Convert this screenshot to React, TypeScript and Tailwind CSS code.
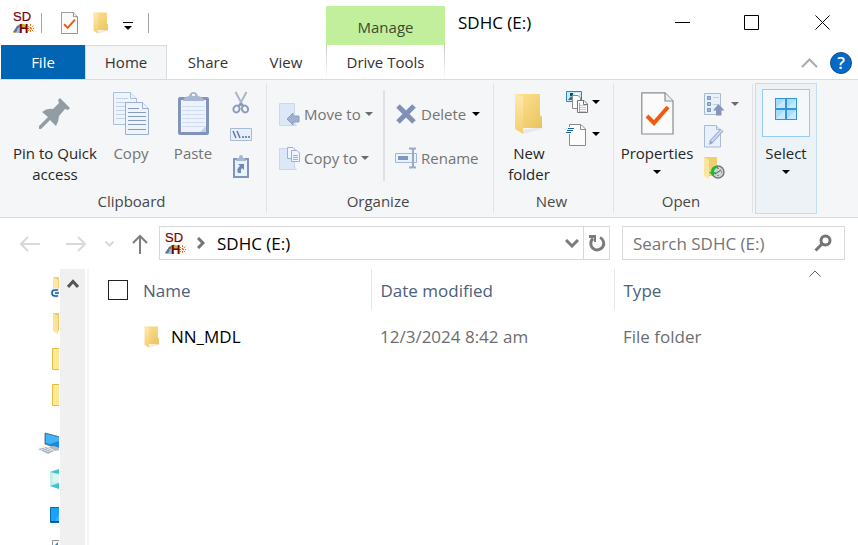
import type { ReactNode } from 'react';

function DriveIcon() {
  return (
    <svg width="22" height="23" viewBox="0 0 22 23" aria-hidden="true" className="shrink-0 overflow-visible">
      <path d="M0 22L4 15Q9 10 14 15L13 17L7 17L3 22Z" fill="#c2b53c" />
      <path d="M0 21L4 15L7 14L4 21Z" fill="#5d7894" />
      <path d="M5 17h3v5H3Z" fill="#a5bce4" />
      <g stroke="#ee741e" strokeWidth="1" strokeDasharray="2 1">
        <path d="M17.5 13v9M14 17.5h7M14.5 14.5l6 6M20.500 14.500l-6 6" />
      </g>
      <text fill="#790008" fontFamily='"Liberation Sans", sans-serif' fontSize="13">
        <tspan x="0" y="10" stroke="#790008" strokeWidth="0.2">SD</tspan>
        <tspan x="6" y="22" fontWeight="bold">H</tspan>
      </text>
    </svg>
  );
}

function FolderIcon({ className }: { className: string }) {
  return (
    <svg viewBox="0 0 30 42" preserveAspectRatio="none" aria-hidden="true" className={className}>
      <defs>
        <linearGradient id="folderBack" x2="1" y2="1">
          <stop stopColor="#ffe394" />
          <stop offset="1" stopColor="#e9c35f" />
        </linearGradient>
        <linearGradient id="folderFront" x2="0" y2="1">
          <stop stopColor="#ffe9ae" />
          <stop offset="1" stopColor="#f5cf70" />
        </linearGradient>
      </defs>
      <path d="M8 37L30 34L27 36L9 41Z" fill="#e9e8e6" />
      <path d="M1 1H26V22L28 24V35H6Z" fill="url(#folderBack)" />
      <path d="M1 1L9 4V41L1 36Z" fill="url(#folderFront)" />
    </svg>
  );
}

function CheckPage({ className, stroke }: { className: string; stroke: string }) {
  return (
    <svg viewBox="0 0 33 43" preserveAspectRatio="none" aria-hidden="true" className={className}>
      <path d="M.8 .8H24L32 9V42H.8Z" fill="#fbfbfb" stroke="#8b8b8b" strokeWidth={stroke} />
      <path d="M24 1V9H32" fill="#eee" stroke="#8b8b8b" strokeWidth={stroke} />
      <path d="M6 24L13 31L27 15" fill="none" stroke="#f25b0d" strokeWidth="4" />
    </svg>
  );
}

function Caret({ className = 'text-black' }: { className?: string }) {
  return (
    <svg width="8" height="4" viewBox="0 0 8 4" aria-hidden="true" className={`shrink-0 ${className}`}>
      <path d="M0 0H8L4 4Z" fill="currentColor" />
    </svg>
  );
}

function PinIcon() {
  return (
    <svg width="32" height="32" viewBox="0 0 32 32" aria-hidden="true">
      <path d="M21 0L31 10L29 12L26 11L20 18Q20 23 17 28L11 22L2 31L0 31V28L9 19L3 14Q8 10 14 11L20 5L19 2Z" fill="#929da3" />
    </svg>
  );
}

function CopyIcon() {
  return (
    <svg width="36" height="43" viewBox="0 0 36 43" fill="#eef4fd" stroke="#abbddc" aria-hidden="true">
      <path d="M.5 .5H17.5L23.5 6.5V32.5H.5Z" />
      <path d="M17.5 .5V6.5H23.5" />
      <path d="M3 6.5H15M3 10.5H20M3 14.5H20M3 18.5H20M3 22.5H20M3 26.5H20" stroke="#c4d2e9" />
      <path d="M12.5 10.5H29.5L35.5 16.5V42.5H12.5Z" stroke="#9dafd1" />
      <path d="M29.5 10.5V16.5H35.5" stroke="#9dafd1" />
      <path d="M15 16.5H26M15 20.5H33M15 24.5H33M15 28.5H33M15 32.5H33M15 37.5H33" stroke="#899abc" />
    </svg>
  );
}

function PasteIcon() {
  return (
    <svg width="31" height="44" viewBox="0 0 31 44" aria-hidden="true">
      <path d="M2 5H29Q31 5 31 7V41Q31 43 29 43H2Q0 43 0 41V7Q0 5 2 5Z" fill="#8294bb" />
      <path d="M3 8H28V40H3Z" fill="#edf4ff" />
      <path d="M4 14.5H27M4 18.5H27M4 22.5H27M4 26.5H27M4 30.5H27M4 34.5H27" stroke="#cfdcf1" />
      <path d="M22 40L28 34V40Z" fill="#c0d0ec" />
      <path d="M5 9Q5 5 11 4Q12 0 15.5 0Q19 0 20 4Q26 5 26 9Z" fill="#a8b7d3" />
      <path d="M14 2H17V4H14Z" fill="#eef4fd" />
    </svg>
  );
}

function CutIcon() {
  return (
    <svg width="18" height="23" viewBox="0 0 18 23" fill="none" aria-hidden="true">
      <path d="M3.5 1L10 13M14.5 1L8 13" stroke="#a9b5ca" strokeWidth="2" />
      <path d="M8 12H10L13 15H5Z" fill="#8b9cc1" />
      <ellipse cx="4.5" cy="18" rx="3" ry="3.5" stroke="#8b9cc1" strokeWidth="2" transform="rotate(25 4.5 18)" />
      <ellipse cx="13" cy="18" rx="3" ry="3.5" stroke="#8b9cc1" strokeWidth="2" transform="rotate(-25 13 18)" />
    </svg>
  );
}

function CopyPathIcon() {
  return (
    <svg width="22" height="13" viewBox="0 0 22 13" aria-hidden="true">
      <path d="M.5 .5H21.5V12.5H.5Z" fill="#e7effb" stroke="#a8bad9" />
      <path d="M3 3L6 10M7 3L10 10" stroke="#64789f" strokeWidth="1.5" />
      <path d="M12 8H14V10H12ZM15 8H17V10H15ZM18 8H20V10H18Z" fill="#7b8db1" />
    </svg>
  );
}

function PasteShortcutIcon() {
  return (
    <svg width="16" height="23" viewBox="0 0 16 23" aria-hidden="true">
      <path d="M1 4H15V22H1Z" fill="#eaf2fe" stroke="#8294bb" strokeWidth="2" />
      <path d="M3 6Q3 3 6 3Q6 0 8 0Q10 0 10 3Q13 3 13 6Z" fill="#a8b7d3" />
      <path d="M5 9H11V15L9 13Q7 15 8 18H5Q3 14 7 11Z" fill="#7488b3" />
    </svg>
  );
}

function MoveIcon() {
  return (
    <svg width="21" height="23" viewBox="0 0 21 23" aria-hidden="true">
      <path d="M.5 .5H15.5V20L17.5 22.5H.5Z" fill="#dce7f7" stroke="#cbd8ec" />
      <path d="M8 16L14 10V13H20V19H14V22Z" fill="#a0b0ce" stroke="#8b9dc1" />
    </svg>
  );
}

function CopyToIcon() {
  return (
    <svg width="21" height="23" viewBox="0 0 21 23" aria-hidden="true">
      <path d="M.5 1.5H15.5V20L17.5 22.5H.5Z" fill="#dce7f7" stroke="#cbd8ec" />
      <g fill="#f0f6ff" stroke="#9fb1d1">
        <path d="M8.5 .5H14L16.5 3V11.5H8.5Z" />
        <path d="M12.5 3.5H18L20.5 6V14.5H12.5Z" />
        <path d="M14 8.5H19M14 10.5H19M14 12.5H19" />
      </g>
    </svg>
  );
}

function DeleteIcon() {
  return (
    <svg width="22" height="20" viewBox="0 0 22 20" aria-hidden="true">
      <path d="M3 2L19 18M19 2L3 18" stroke="#8090b6" strokeWidth="5" />
    </svg>
  );
}

function RenameIcon() {
  return (
    <svg width="22" height="22" viewBox="0 0 22 22" fill="none" aria-hidden="true">
      <path d="M.5 6.5H21.5V15.5H.5Z" fill="#e9f2ff" stroke="#a1b6d9" />
      <path d="M3 9H13V13H3Z" fill="#8295be" />
      <path d="M14 1.5H17L18 3L19 1.5H21M18 2V20M14 20.5H17L18 19L19 20.5H21" stroke="#9aaac8" strokeWidth="2" />
    </svg>
  );
}

function NewItemIcon() {
  return (
    <svg width="22" height="22" viewBox="0 0 22 22" aria-hidden="true">
      <path d="M.5 .5H15.5V10.5H.5Z" fill="#c7edfa" stroke="#3484b7" />
      <path d="M2 9L5 5L8 9Z" fill="#366da0" />
      <path d="M4 2H7V5H4Z" fill="#174b55" />
      <path d="M9 2H13V4H9Z" fill="#fff" />
      <path d="M6.5 4.5H12L14.5 7V17.5H6.5Z" fill="#fff" stroke="#8b8b8b" />
      <path d="M11.5 9.5H18L21.5 13V21.5H11.5Z" fill="#fff" stroke="#777" />
      <path d="M17.5 10V13.5H21" fill="none" stroke="#777" />
      <path d="M13.5 12V21" stroke="#e58d8d" />
      <path d="M14 14.5H20M14 16.5H20M14 18.5H20M14 20.5H20" stroke="#b3d2e8" />
    </svg>
  );
}

function EasyAccessIcon() {
  return (
    <svg width="22" height="23" viewBox="0 0 22 23" aria-hidden="true">
      <path d="M3.500 1.500H15L19.500 6V22.500H3.500Z" fill="#fcfcfc" stroke="#8b8b8b" />
      <path d="M14.500 2V6.500H19" fill="none" stroke="#8b8b8b" />
      <path d="M0 4H5V11H0Z" fill="#f5f6f7" />
      <path d="M2 5.500H8M1 7.500H7M0 9.500H5" stroke="#155ca5" />
    </svg>
  );
}

function OpenIcon() {
  return (
    <svg width="21" height="23" viewBox="0 0 21 23" aria-hidden="true">
      <path d="M.5 .5H16.5V21.5H.5Z" fill="#e8f0fb" stroke="#aabbd6" />
      <path d="M3.5 3.5H6.5V6.5H3.5ZM3.5 9.5H6.5V12.5H3.5ZM3.5 15.5H6.5V18.5H3.5Z" fill="#a7bad8" stroke="#7f91b6" />
      <path d="M9 4.5H15M9 11.5H15" stroke="#c1cde0" />
      <path d="M14.5 11L20.5 17.5H17.5V22.5H12V17.5H9Z" fill="#8596b9" />
    </svg>
  );
}

function EditIcon() {
  return (
    <svg width="21" height="23" viewBox="0 0 21 23" aria-hidden="true">
      <path d="M.5 .5H12L16.5 5V22H.5Z" fill="#e8f0fb" stroke="#a9bad6" />
      <path d="M12.5 .5V4.5H17" fill="none" stroke="#a9bad6" />
      <path d="M18 5L7 17" stroke="#98aaca" strokeWidth="4" />
      <path d="M18 5L7 17" stroke="#c8d8ef" strokeWidth="2" />
      <path d="M5 20L6 15L9 18Z" fill="#91a3c4" />
    </svg>
  );
}

function HistoryIcon() {
  return (
    <svg width="21" height="24" viewBox="0 0 21 24" aria-hidden="true">
      <path d="M0 1H13V20H4Z" fill="#f0cf70" />
      <path d="M0 1L5 4V23L0 20Z" fill="#ffe5a0" />
      <circle cx="14" cy="16" r="6" fill="#d0d3d3" stroke="#757a7b" strokeWidth="1.5" />
      <path d="M11 18L14 16L17 14M14 12V13M18 16H17M14 20V19" stroke="#555" fill="none" />
      <path d="M14 10Q7 9 7 16H5L9 20L12 16H10Q10 12 14 12Z" fill="#22b63a" />
    </svg>
  );
}

function SelectIcon() {
  return (
    <svg width="22" height="22" viewBox="0 0 22 22" aria-hidden="true">
      <path d="M0 0H22V22H0Z" fill="#3196df" />
      <path d="M1 1H10V10H1ZM12 1H21V10H12ZM1 12H10V21H1ZM12 12H21V21H12Z" fill="#a8dcfb" />
      <path d="M1 10L10 1V10ZM12 10L21 1V10ZM1 21L10 12V21ZM12 21L21 12V21Z" fill="#c6e9ff" />
    </svg>
  );
}

function Group({ label, className, children }: { label: string; className: string; children: ReactNode }) {
  return (
    <section aria-label={label} className={`my-1 flex shrink-0 flex-col border-r border-[#e1e2e3] ${className}`}>
      <div className="flex h-[108px]">{children}</div>
      <h2 className="pr-1 pt-0.5 text-center leading-6 text-[#484848]">{label}</h2>
    </section>
  );
}

function BigButton({ icon, children, className }: { icon: ReactNode; children: ReactNode; className: string }) {
  return (
    <button className={`flex shrink-0 flex-col items-center leading-[21px] ${className}`}>
      <span className="flex h-[59px] items-center">{icon}</span>
      {children}
    </button>
  );
}

function IconButton({ label, children }: { label: string; children: ReactNode }) {
  return (
    <button aria-label={label} className="flex h-8 items-center gap-1">
      {children}
    </button>
  );
}

function RowButton({ icon, label, caret }: { icon: ReactNode; label: string; caret?: string }) {
  return (
    <button className="flex h-11 items-center gap-1 text-[#747474]">
      {icon}
      <span>{label}</span>
      {caret && <Caret className={caret} />}
    </button>
  );
}

function Ribbon() {
  return (
    <div className="flex h-[139px] shrink-0 overflow-hidden border-y border-[#dadbdc] bg-[#f5f6f7] pl-px">
      <Group label="Clipboard" className="w-[266px]">
        <BigButton className="w-[108px] text-[#262626]" icon={<PinIcon />}>
          <span>Pin to Quick</span>
          <span>access</span>
        </BigButton>
        <BigButton className="w-11 text-[#747474]" icon={<CopyIcon />}>
          Copy
        </BigButton>
        <BigButton className="w-20 text-[#747474]" icon={<PasteIcon />}>
          Paste
        </BigButton>
        <div className="-ml-[3px] flex flex-col items-center pt-0.5">
          <IconButton label="Cut"><CutIcon /></IconButton>
          <IconButton label="Copy path"><CopyPathIcon /></IconButton>
          <IconButton label="Paste shortcut"><PasteShortcutIcon /></IconButton>
        </div>
      </Group>

      <Group label="Organize" className="w-[227px]">
        <div className="ml-3 w-[104px] pt-2">
          <RowButton icon={<MoveIcon />} label="Move to" caret="text-[#6b6b6b]" />
          <RowButton icon={<CopyToIcon />} label="Copy to" caret="text-[#6b6b6b]" />
        </div>
        <div className="mt-1.5 h-[91px] w-0.5 bg-[#dfe1e3]" />
        <div className="pl-2.5 pt-2">
          <RowButton icon={<DeleteIcon />} label="Delete" caret="ml-0.5 text-black" />
          <RowButton icon={<RenameIcon />} label="Rename" />
        </div>
      </Group>

      <Group label="New" className="w-[120px]">
        <BigButton className="w-[70px] text-[#262626]" icon={<FolderIcon className="h-[42px] w-[30px]" />}>
          <span>New</span>
          <span>folder</span>
        </BigButton>
        <div className="flex flex-col pl-0.5 pt-0.5">
          <IconButton label="New item"><NewItemIcon /><Caret /></IconButton>
          <IconButton label="Easy access"><EasyAccessIcon /><Caret /></IconButton>
        </div>
      </Group>

      <Group label="Open" className="w-[139px]">
        <BigButton className="w-[86px] text-[#262626]" icon={<CheckPage className="h-[43px] w-[33px]" stroke="1.2" />}>
          <span>Properties</span>
          <span className="flex h-4 items-center"><Caret /></span>
        </BigButton>
        <div className="flex flex-col pl-1 pt-1">
          <IconButton label="Open with"><OpenIcon /><Caret className="ml-0.5 text-[#6b6b6b]" /></IconButton>
          <IconButton label="Edit"><EditIcon /></IconButton>
          <IconButton label="History"><HistoryIcon /></IconButton>
        </div>
      </Group>

      <button className="my-[3px] ml-0.5 flex w-[62px] shrink-0 flex-col items-center border border-[#c4ddf2] bg-[#edf2f6] pt-[5px] leading-[21px] text-[#262626]">
        <span className="flex h-12 w-12 items-start justify-center border border-[#99caf5] bg-[#f5f8fa] pt-2">
          <SelectIcon />
        </span>
        <span className="mt-1.5">Select</span>
        <span className="flex h-4 items-center"><Caret /></span>
      </button>
    </div>
  );
}

function TitleBar() {
  return (
    <header className="flex h-20 shrink-0">
      <div className="flex w-[325px] shrink-0 flex-col">
        <div className="flex h-[45px] items-center gap-2 pl-[13px]">
          <DriveIcon />
          <span className="-ml-0.5 h-5 w-px bg-[#a5a5a5]" />
          <button aria-label="Properties" className="ml-[11px]">
            <CheckPage className="h-[22px] w-[17px]" stroke="1.8" />
          </button>
          <button aria-label="New folder" className="ml-[7px]">
            <FolderIcon className="h-[22px] w-4" />
          </button>
          <button aria-label="Customize toolbar" className="ml-1.5 mt-1.5">
            <svg width="10" height="8" viewBox="0 0 10 8" aria-hidden="true">
              <path d="M0 0H10V1H0ZM1 4H9L5 8Z" fill="#000" />
            </svg>
          </button>
          <span className="ml-[7px] h-5 w-px bg-[#a5a5a5]" />
        </div>
        <nav className="flex h-[35px] text-[#333]">
          <button className="mb-px ml-px w-[84px] bg-[#0265b3] text-white">File</button>
          <button className="-mb-px w-[82px] border-x border-t border-[#dadbdc] bg-[#f5f6f7] pb-0.5">Home</button>
          <button className="w-[82px]">Share</button>
          <button className="w-[74px]">View</button>
        </nav>
      </div>
      <div className="ml-px flex w-[119px] shrink-0 flex-col pt-1.5">
        <div className="flex h-[39px] items-center justify-center bg-[#c1ef9c] pt-1 text-[#3e4b35]">Manage</div>
        <button className="h-[35px] w-full bg-gradient-to-b from-[#c8c8c8] to-white px-px text-[#333]">
          <span className="flex h-full items-center justify-center bg-white">Drive Tools</span>
        </button>
      </div>
      <div className="flex min-w-0 flex-1 flex-col">
        <div className="flex h-[45px] items-center pl-[13px]">
          <h1 className="flex-1 whitespace-nowrap text-[17px] text-black">SDHC (E:)</h1>
          <button aria-label="Minimize" className="flex w-[68px] justify-center">
            <svg width="15" height="15" viewBox="0 0 15 15" stroke="#000" aria-hidden="true"><path d="M0 7.5H15" /></svg>
          </button>
          <button aria-label="Maximize" className="flex w-[71px] justify-center">
            <svg width="15" height="15" viewBox="0 0 15 15" stroke="#000" fill="none" aria-hidden="true"><path d="M.5 .5H14.5V14.5H.5Z" /></svg>
          </button>
          <button aria-label="Close" className="flex w-[71px] justify-center">
            <svg width="15" height="15" viewBox="0 0 15 15" stroke="#000" aria-hidden="true"><path d="M.5 .5L14.5 14.5M14.5 .5L.5 14.5" /></svg>
          </button>
        </div>
        <div className="flex h-[35px] items-center justify-end gap-3 pr-1.5">
          <button aria-label="Collapse ribbon">
            <svg width="17" height="10" viewBox="0 0 17 10" fill="none" stroke="#aaa" strokeWidth="2" aria-hidden="true"><path d="M1 9L8.500 1.500L16 9" /></svg>
          </button>
          <button aria-label="Help" className="flex size-[22px] items-center justify-center rounded-full border border-[#0b4c97] bg-[#0668c7] text-[17px] font-semibold leading-5 text-white">
            ?
          </button>
        </div>
      </div>
    </header>
  );
}

function AddressBar() {
  return (
    <div className="flex h-[51px] shrink-0 items-start pl-5 pr-[13px] pt-2">
      <div className="flex h-[35px] w-[139px] shrink-0 items-center text-[#d9d9d9]">
        <button aria-label="Back">
          <svg width="20" height="16" viewBox="0 0 20 16" fill="none" stroke="currentColor" strokeWidth="2" aria-hidden="true"><path d="M20 8H1M8 1L1 8L8 15" /></svg>
        </button>
        <button aria-label="Forward" className="ml-[26px]">
          <svg width="20" height="16" viewBox="0 0 20 16" fill="none" stroke="currentColor" strokeWidth="2" aria-hidden="true"><path d="M0 8H19M12 1L19 8L12 15" /></svg>
        </button>
        <button aria-label="Recent locations" className="ml-[19px]">
          <svg width="9" height="6" viewBox="0 0 9 6" fill="none" stroke="currentColor" strokeWidth="2" aria-hidden="true"><path d="M.5 .5L4.500 4.500L8.500 .5" /></svg>
        </button>
        <button aria-label="Up" className="ml-[18px]">
          <svg width="16" height="20" viewBox="0 0 16 20" fill="none" stroke="#7d7d7d" strokeWidth="2" aria-hidden="true"><path d="M8 20V2M1 9L8 2L15 9" /></svg>
        </button>
      </div>
      <div className="flex h-[34px] min-w-0 flex-1 items-center border border-[#d9d9d9] pl-[5px]">
        <DriveIcon />
        <svg width="8" height="12" viewBox="0 0 8 12" fill="none" stroke="#747474" strokeWidth="3" aria-hidden="true" className="ml-2.5 shrink-0"><path d="M1 1L6 6L1 11" /></svg>
        <button className="ml-3 flex-1 whitespace-nowrap pt-0.5 text-left text-[17px] text-black">SDHC (E:)</button>
        <button aria-label="Previous locations" className="mr-1">
          <svg width="14" height="9" viewBox="0 0 14 9" fill="none" stroke="#7b7b7b" strokeWidth="3" aria-hidden="true"><path d="M1 1L7 7L13 1" /></svg>
        </button>
        <button aria-label="Refresh" className="flex h-full w-[26px] items-center justify-center border-l border-[#d9d9d9]">
          <svg width="18" height="18" viewBox="0 0 18 18" fill="none" aria-hidden="true">
            <path d="M5 4.500A6.500 6.500 0 1 0 12 3.500" stroke="#7b7b7b" strokeWidth="3" />
            <path d="M1 1H8V8H6V4H1Z" fill="#7b7b7b" />
          </svg>
        </button>
      </div>
      <label className="ml-3 flex h-[34px] w-[223px] shrink-0 items-center border border-[#d9d9d9] pl-2.5 pr-3">
        <input aria-label="Search SDHC (E:)" placeholder="Search SDHC (E:)" className="min-w-0 flex-1 pt-0.5 text-[17px] outline-none placeholder:text-[#757575]" />
        <svg width="18" height="18" viewBox="0 0 18 18" fill="none" stroke="#757575" aria-hidden="true" className="shrink-0">
          <circle cx="11.500" cy="6.500" r="4.500" strokeWidth="3" />
          <path d="M8 10L1.500 16.500" strokeWidth="3" />
        </svg>
      </label>
    </div>
  );
}

function LibraryIcon() {
  return (
    <svg width="7" height="22" viewBox="0 0 7 22" aria-hidden="true">
      <path d="M8 .5H.5V21.5H8" fill="#ffe794" stroke="#e7bd43" />
      <path d="M3.500 2V20" stroke="#fff0b6" />
    </svg>
  );
}

function NavItem({ label, children }: { label: string; children: ReactNode }) {
  return (
    <button aria-label={label} className="flex h-9 w-full shrink-0 items-center justify-end">
      {children}
    </button>
  );
}

function NavPane() {
  return (
    <nav className="flex w-[59px] shrink-0 flex-col overflow-hidden">
      <NavItem label="Linked folder">
        <svg width="9" height="22" viewBox="0 0 9 22" aria-hidden="true">
          <path d="M3 1H9V15H3Z" fill="#f3d274" />
          <path d="M3 1L8 4V15H3Z" fill="#ffe6a5" />
          <rect x="0" y="12" width="12" height="10" rx="5" fill="#e7edf1" />
          <path d="M8 14H5Q2 14 2 17Q2 20 5 20H8M5 17H9" fill="none" stroke="#1b6299" strokeWidth="1.500" />
        </svg>
      </NavItem>
      <NavItem label="Folder">
        <svg width="6" height="22" viewBox="0 0 6 22" aria-hidden="true">
          <path d="M0 1H6V19H0Z" fill="#efc864" />
          <path d="M0 1L5 4V22L0 19Z" fill="#ffe29a" />
        </svg>
      </NavItem>
      <NavItem label="Library"><LibraryIcon /></NavItem>
      <NavItem label="Library"><LibraryIcon /></NavItem>
      <div className="mt-3">
        <NavItem label="This PC">
          <svg width="21" height="22" viewBox="0 0 21 22" aria-hidden="true">
            <path d="M7 1L22 5V17L7 12Z" fill="#1988dd" stroke="#667987" />
            <path d="M8 2L21 5.500V9L12 12L8 11Z" fill="#42b5fa" />
            <path d="M10 15L16 14L22 16V18L17 19Z" fill="#b6bdc3" />
            <path d="M0 17L8 15L16 19L10 22Z" fill="#aeb6bd" />
            <path d="M3 17L12 20M6 16L14 19" stroke="#edf1f3" strokeDasharray="2 1" />
          </svg>
        </NavItem>
      </div>
      <NavItem label="3D Objects">
        <svg width="9" height="20" viewBox="0 0 9 20" aria-hidden="true">
          <path d="M0 3L9 0V20L0 17Z" fill="#c4efed" />
          <path d="M0 3L9 0V5ZM0 17L9 14V20Z" fill="#41c5c5" />
          <path d="M3 5L9 6V13L3 14Z" fill="#dcf5f3" />
        </svg>
      </NavItem>
      <NavItem label="Desktop">
        <svg width="9" height="16" viewBox="0 0 9 16" aria-hidden="true">
          <path d="M10 .5H.5V15.500H10" fill="#1ba2fb" stroke="#096baa" />
          <path d="M5 14L9 7V14Z" fill="#37b4ff" />
          <path d="M1 14.500H9" stroke="#064f85" />
        </svg>
      </NavItem>
      <NavItem label="Documents">
        <svg width="7" height="22" viewBox="0 0 7 22" aria-hidden="true">
          <path d="M8 .5H.5V21.500H8" fill="#fafafa" stroke="#929292" />
          <path d="M3 5L6 2V8H3Z" fill="#3388b9" />
        </svg>
      </NavItem>
    </nav>
  );
}

function FileList() {
  return (
    <main className="relative min-w-0 flex-1">
      <svg width="12" height="7" viewBox="0 0 12 7" fill="none" stroke="#606060" aria-hidden="true" className="absolute right-[37px] top-px">
        <path d="M.5 6.500L6 1L11.500 6.500" />
      </svg>
      <table className="w-full table-fixed border-collapse text-left text-[17px]">
        <colgroup>
          <col className="w-[54px]" />
          <col className="w-[228px]" />
          <col className="w-[243px]" />
          <col />
        </colgroup>
        <thead>
          <tr className="h-[41px] text-[#4c607a]">
            <th className="pl-[19px] font-normal">
              <input type="checkbox" aria-label="Select all" className="block size-5 appearance-none border border-[#222] bg-white" />
            </th>
            <th className="border-r border-[#e5e5e5] pt-0.5 font-normal">Name</th>
            <th className="border-r border-[#e5e5e5] pl-[9px] pt-0.5 font-normal">Date modified</th>
            <th className="pl-[9px] pt-0.5 font-normal">Type</th>
          </tr>
        </thead>
        <tbody>
          <tr className="h-[53px] text-[#6d6d6d]">
            <td />
            <td className="text-black">
              <span className="flex items-center gap-[11px]">
                <FolderIcon className="ml-px h-[22px] w-4" />
                NN_MDL
              </span>
            </td>
            <td className="pl-[9px]">12/3/2024 8:42 am</td>
            <td className="pl-[9px]">File folder</td>
          </tr>
        </tbody>
      </table>
    </main>
  );
}

export default function App() {
  return (
    <div className="flex h-screen flex-col overflow-hidden bg-white font-['Open_Sans','Noto_Sans',sans-serif] text-[15px]">
      <TitleBar />
      <div className="-mt-px flex shrink-0 flex-col">
        <Ribbon />
      </div>
      <AddressBar />
      <div className="flex min-h-0 flex-1">
        <NavPane />
        <div className="ml-px flex w-[25px] shrink-0 justify-center bg-[#f0f0f0] pt-2.5">
          <button aria-label="Scroll up" className="self-start">
            <svg width="12" height="10" viewBox="0 0 12 10" fill="none" stroke="#555" strokeWidth="3" aria-hidden="true"><path d="M1 8L6 2.500L11 8" /></svg>
          </button>
        </div>
        <div className="ml-0.5 w-0.5 shrink-0 bg-[#f5f5f5]" />
        <FileList />
      </div>
    </div>
  );
}
